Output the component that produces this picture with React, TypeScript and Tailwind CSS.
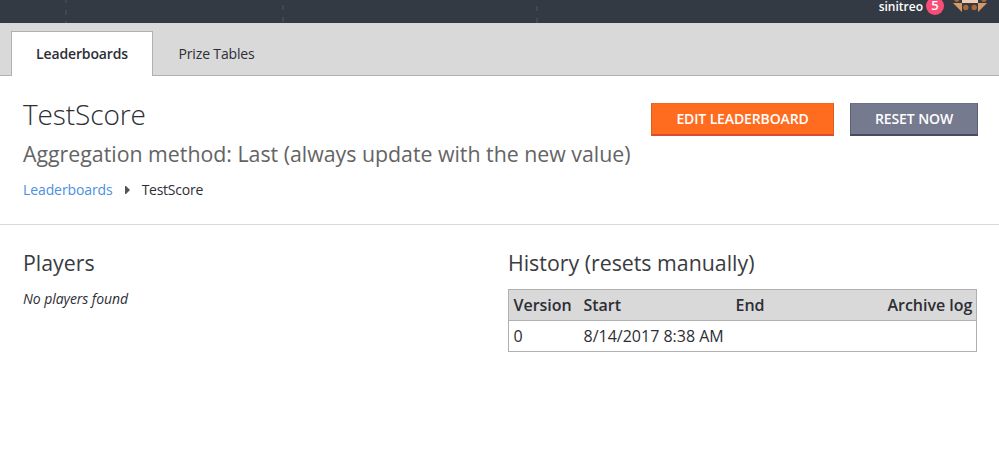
import type { ReactNode } from "react";

function Action({ className, children }: { className: string; children: ReactNode }) {
  return (
    <button className={`flex h-[33px] items-center justify-center border border-b-2 pb-[2px] text-[14px] font-semibold text-white ${className}`}>
      {children}
    </button>
  );
}

function Avatar() {
  return (
    <svg className="ml-[9px] h-[13px] w-[34px]" viewBox="0 0 34 13">
      <rect x="9" y="0" width="16" height="3" fill="#f0cdb2" />
      <path d="M0 3H9V12Z M34 3H25V12Z" fill="#d29a6c" />
      <circle cx="3.8" cy="-0.5" r="2.6" fill="#aa6738" />
      <circle cx="31" cy="-0.5" r="2.6" fill="#aa6738" />
      <circle cx="12.8" cy="7.5" r="2.7" fill="#aa6738" />
      <circle cx="21.2" cy="7.5" r="2.7" fill="#aa6738" />
    </svg>
  );
}

export default function App() {
  return (
    <div className="h-[453px] w-[999px] overflow-hidden bg-white font-['Open_Sans',sans-serif] text-[14px] text-[#2d2e35]">
      <header className="relative flex h-[23px] items-start justify-end bg-[#333a43] pr-[12px] text-white">
        <svg className="absolute left-0 top-0 h-[23px] w-[600px]" viewBox="0 0 600 23" fill="#414851">
          <path d="M65 0h2v3h-2zM65 10h2v5h-2zM65 21h2v2h-2zM282 5h2v5h-2zM282 17h2v5h-2zM536 6h2v5h-2zM536 18h2v5h-2z" />
        </svg>
        <span className="pt-px text-[12px] font-semibold leading-[12px]">sinitreo</span>
        <span className="-mt-[3px] ml-[3px] flex h-[18px] w-[18px] items-start justify-center rounded-full bg-[#f94d77] pt-[2px] text-[13px] font-semibold leading-[13px]">5</span>
        <Avatar />
      </header>
      <nav className="flex h-[53px] items-end border-b border-[#b0b0b0] bg-[#d9d9d9] pl-[11px]">
        <a className="-mb-px flex h-[45px] w-[142px] items-center border border-b-0 border-[#b0b0b0] bg-white pb-[2px] pl-[24px] font-semibold tracking-[-0.13px]">Leaderboards</a>
        <a className="flex h-[44px] items-center pl-[25.5px] tracking-[-0.15px]">Prize Tables</a>
      </nav>
      <section className="flex h-[149px] justify-between border-b border-[#d9d9d9] pl-[23px] pr-[21px]">
        <div>
          <h1 className="mt-[19px] text-[28px] font-light leading-[38px] tracking-[-0.1px]">TestScore</h1>
          <h2 className="mt-[6px] whitespace-nowrap text-[21.33px] leading-[30px] tracking-[-0.01px] text-[#646464]">Aggregation method: Last (always update with the new value)</h2>
          <div className="mt-[11px] flex items-center leading-[20px]">
            <a className="tracking-[-0.1px] text-[#4a90e2]">Leaderboards</a>
            <svg className="ml-[12px] mr-[12px] h-[8px] w-[5px]" viewBox="0 0 5 8"><path d="M0 0H1L5 4L1 8H0Z" fill="#555" /></svg>
            <span className="tracking-[-0.25px]">TestScore</span>
          </div>
        </div>
        <div className="-ml-[20px] mt-[27px] flex gap-4">
          <Action className="w-[183px] border-x-[#d95f20] border-b-[#dc4935] border-t-[#e86a25] bg-[#ff6c20] tracking-[-0.13px]">EDIT LEADERBOARD</Action>
          <Action className="w-[128px] border-x-[#5b6072] border-b-[#474b5b] border-t-[#6b7083] bg-[#757a8e] tracking-[-0.1px]">RESET NOW</Action>
        </div>
      </section>
      <main className="flex pl-[23px] pt-[23px]">
        <section className="w-[485px]">
          <h3 className="text-[21.33px] leading-[30px] text-[#3a3b42]">Players</h3>
          <p className="mt-[11px] italic leading-[20px] tracking-[-0.06px]">No players found</p>
        </section>
        <section className="w-[469px]">
          <h3 className="text-[21.33px] leading-[30px] text-[#3a3b42]">History (resets manually)</h3>
          <div className="mt-[11px] border border-[#b0b0b0] text-[16px]">
            <div className="grid h-[31px] grid-cols-[70px_152px_152px_1fr] items-center border-b border-[#b0b0b0] bg-[#d9d9d9] pl-[4.5px] font-semibold tracking-[-0.03px]">
              <span>Version</span><span>Start</span><span>End</span><span>Archive log</span>
            </div>
            <div className="grid h-[30px] grid-cols-[70px_152px_152px_1fr] items-center pl-[4.5px]">
              <span>0</span><span>8/14/2017 8:38 AM</span>
            </div>
          </div>
        </section>
      </main>
    </div>
  );
}
